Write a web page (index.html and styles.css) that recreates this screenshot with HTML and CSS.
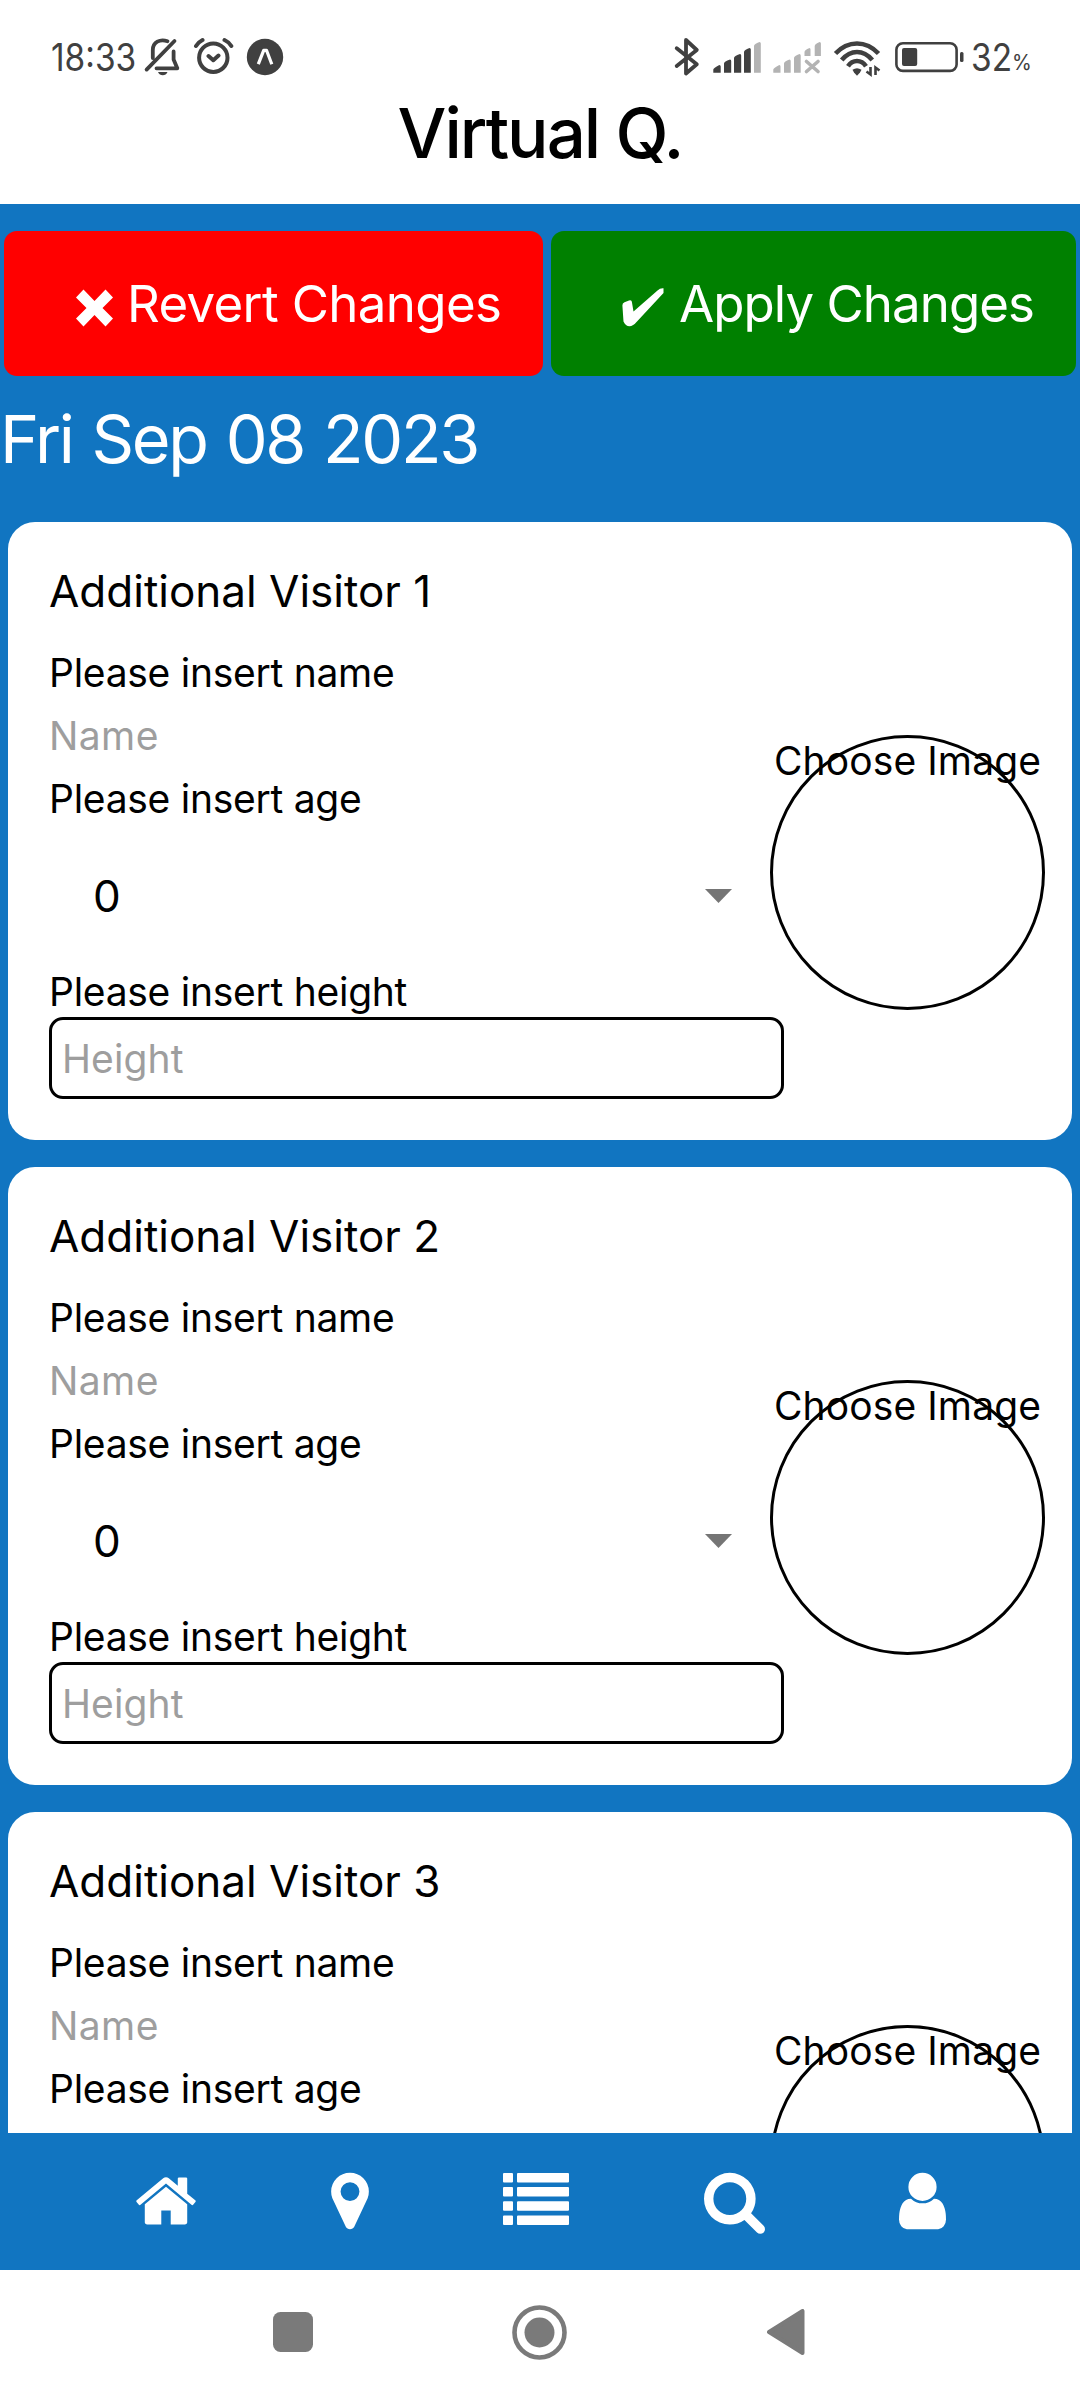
FILE: index.html
```
<!DOCTYPE html>
<html lang="en">
<head>
<meta charset="utf-8">
<title>Virtual Q.</title>
<link rel="stylesheet" href="styles.css">
</head>
<body>
<div class="screen">
  <header class="header">
    <div class="status">
      <div class="status-left">
        <span class="time">18:33</span>
        <svg class="bell" width="40" height="44" viewBox="143 36 40 44" fill="none" stroke="#404040" stroke-width="3.8" stroke-linecap="round" stroke-linejoin="round">
          <path d="M146.6 70.6 174.5 42M152.8 59V51C152.8 43 160 39.6 167.500 42.2M156.500 69.300H177.300L173.600 60.500V52.500"/>
          <path d="M158 73h9.500q-1.500 3.300-4.750 3.300t-4.750-3.300z" fill="#404040" stroke="none"/>
        </svg>
        <svg class="alarm" width="42" height="44" viewBox="192 36 42 44" fill="none" stroke="#404040" stroke-width="4" stroke-linecap="round" stroke-linejoin="round">
          <circle cx="213.300" cy="58.700" r="14.200"/>
          <path d="M208.500 57 213.300 61.200 218.500 56.500M196 47Q198.500 43 202.500 41M224.500 41Q229 43 231.300 47"/>
        </svg>
        <svg class="expo" width="38" height="38" viewBox="246 38 38 38">
          <circle cx="265" cy="57" r="18.200" fill="#404040"/>
          <path d="M258.300 64.200 263.700 50.300h2.800L271.800 64.200" fill="none" stroke="#fff" stroke-width="3.200" stroke-linejoin="round"/>
        </svg>
      </div>
      <div class="status-right">
        <svg width="225" height="44" viewBox="670 35 225 44">
          <path d="M676.700 48.300 696.800 64.200 686 73.500V40L696.800 50 676.700 66" fill="none" stroke="#404040" stroke-width="3.800" stroke-linecap="round" stroke-linejoin="round"/>
          <g fill="#404040">
            <path d="M713.300 72.700V69.500q0-1.500 6-4.500 1.400 0 1.400 1.500v6.200zM724 72.700V63.500q0-2 6-4 1.200 0 1.200 1.500v11.700zM734 72.700V58q0-2 6-4 1.200 0 1.200 1.500v17.200zM744 72.700V52q0-2 5.500-4 1.300 0 1.300 1.500v23.200z"/>
          </g>
          <g fill="#b3b3b3">
            <path d="M754 72.700V46q0-2 5.500-4 1.300 0 1.300 1.500v29.200zM773.300 72.700V69.500q0-1.500 6-4.500 1.200 0 1.200 1.500v6.200zM784 72.700V63.500q0-2 5.500-4 1.200 0 1.200 1.500v11.700zM794 72.700V58q0-2 5.500-4 1.200 0 1.200 1.500v17.200zM804.500 56V52q0-2 5-4 1 0 1 1.500V56zM814.700 56V46q0-2 5-4 1.200 0 1.200 1.500V56z"/>
          </g>
          <path d="M806.500 61.500 818 71.500M818 61.500 806.500 71.500" stroke="#b3b3b3" stroke-width="3.600" stroke-linecap="round"/>
          <g fill="none" stroke="#404040" stroke-width="4.600">
            <path d="M835.500 53.500Q845 43.500 857 43.500T878.500 53.500M841.700 60Q848.500 52 857 52T872.300 60M848 66.200Q851.500 61 857 61T866 66.200"/>
          </g>
          <path d="M852.500 69.800q4.500-3.300 9 0l-1.500 2.700-3 3.200-3-3.200z" fill="#404040"/>
          <path d="M870.500 67v7.500l-4-3M875.500 75v-7.500l4 3" fill="none" stroke="#404040" stroke-width="2.600"/>
        </svg>
        <svg width="70" height="32" viewBox="895 41 70 32">
          <rect x="896.400" y="43.300" width="60.200" height="27.600" rx="6.500" fill="none" stroke="#404040" stroke-width="2.600"/>
          <rect x="902" y="48" width="15.200" height="18" rx="2" fill="#404040"/>
          <rect x="960" y="52" width="3.500" height="10" rx="1.500" fill="#404040"/>
        </svg>
        <span class="battery">32</span><span class="percent">%</span>
      </div>
    </div>
    <h1 class="brand">Virtual Q.</h1>
  </header>

  <main class="content">
    <div class="actions">
      <button class="action revert">
        <svg width="37" height="38" viewBox="0 0 37 38"><path d="M7.500.5 18.500 12 29.500.5 37 8.500 26.500 19 37 29.500 29.500 37.500 18.500 26 7.500 37.500 0 29.500 10.500 19 0 8.500z" fill="#fff"/></svg>
        <span>Revert Changes</span>
      </button>
      <button class="action apply">
        <svg width="42" height="39" viewBox="0 0 42 39"><path d="M.4 17.500Q.3 15.200 2.500 14.200L7 12.500Q9.700 11.700 9.900 14L11.500 23.500 35.500 2.500Q38 0 41.500.3V5L15 33.500Q11 38.300 7.500 38.300 3.500 38 1.500 33.500z" fill="#fff"/></svg>
        <span>Apply Changes</span>
      </button>
    </div>
    <h2 class="date">Fri Sep 08 2023</h2>

    <div class="cards">
      <section class="card">
        <h3 class="card-title">Additional Visitor 1</h3>
        <div class="card-body">
          <div class="fields">
            <div class="row">Please insert name</div>
            <div class="row hint name">Name</div>
            <div class="row">Please insert age</div>
            <div class="select"><span>0</span><svg width="27" height="14" viewBox="0 0 27 14"><path d="M0 0h27L13.500 14z" fill="#757575"/></svg></div>
            <div class="row tight">Please insert height</div>
            <div class="input hint">Height</div>
          </div>
          <div class="avatar"><span>Choose Image</span></div>
        </div>
      </section>
      <section class="card">
        <h3 class="card-title">Additional Visitor 2</h3>
        <div class="card-body">
          <div class="fields">
            <div class="row">Please insert name</div>
            <div class="row hint name">Name</div>
            <div class="row">Please insert age</div>
            <div class="select"><span>0</span><svg width="27" height="14" viewBox="0 0 27 14"><path d="M0 0h27L13.500 14z" fill="#757575"/></svg></div>
            <div class="row tight">Please insert height</div>
            <div class="input hint">Height</div>
          </div>
          <div class="avatar"><span>Choose Image</span></div>
        </div>
      </section>
      <section class="card">
        <h3 class="card-title">Additional Visitor 3</h3>
        <div class="card-body">
          <div class="fields">
            <div class="row">Please insert name</div>
            <div class="row hint name">Name</div>
            <div class="row">Please insert age</div>
          </div>
          <div class="avatar"><span>Choose Image</span></div>
        </div>
      </section>
    </div>
  </main>

  <nav class="tabs">
    <svg width="60" height="66" viewBox="89 0 1614 1792"><path d="M1472 992v480q0 26-19 45t-45 19h-384v-384h-256v384h-384q-26 0-45-19t-19-45v-480q0-1 .5-3t.5-3l575-474 575 474q1 2 1 6zm223-69l-62 74q-8 9-21 11h-3q-13 0-21-7l-692-577-692 577q-12 8-24 7-13-2-21-11l-62-74q-8-10-7-23.500t11-21.500l719-599q32-26 76-26t76 26l244 204v-195q0-14 9-23t23-9h192q14 0 23 9t9 23v408l219 182q10 8 11 21.500t-7 23.500z"/></svg>
    <svg width="38" height="66" viewBox="384 0 1024 1792"><path d="M1152 640q0-106-75-181t-181-75-181 75-75 181 75 181 181 75 181-75 75-181zm256 0q0 109-33 179l-364 774q-16 33-47.500 52t-67.500 19-67.500-19-46.500-52l-365-774q-33-70-33-179 0-212 150-362t362-150 362 150 150 362z"/></svg>
    <svg width="66" height="66" viewBox="0 0 66 66"><path d="M1 5h8q1 0 1 1v7.500q0 1-1 1H1q-1 0-1-1V6q0-1 1-1zm0 14.100h8q1 0 1 1v7.500q0 1-1 1H1q-1 0-1-1v-7.500q0-1 1-1zm0 14.100h8q1 0 1 1v7.500q0 1-1 1H1q-1 0-1-1v-7.500q0-1 1-1zm0 14.200h8q1 0 1 1v7.500q0 1-1 1H1q-1 0-1-1v-7.500q0-1 1-1zM15 5h50q1 0 1 1v7.500q0 1-1 1H15q-1 0-1-1V6q0-1 1-1zm0 14.100h50q1 0 1 1v7.500q0 1-1 1H15q-1 0-1-1v-7.500q0-1 1-1zm0 14.100h50q1 0 1 1v7.500q0 1-1 1H15q-1 0-1-1v-7.500q0-1 1-1zm0 14.200h50q1 0 1 1v7.500q0 1-1 1H15q-1 0-1-1v-7.500q0-1 1-1z"/></svg>
    <svg width="61" height="68" viewBox="64 0 1664 1846"><path d="M1216 832q0-185-131.500-316.500t-316.500-131.500-316.500 131.500-131.500 316.500 131.500 316.500 316.500 131.500 316.500-131.500 131.500-316.500zm512 832q0 52-38 90t-90 38q-54 0-90-38l-343-342q-179 124-399 124-143 0-273.500-55.500t-225-150-150-225-55.500-273.500 55.500-273.500 150-225 225-150 273.500-55.500 273.500 55.500 225 150 150 225 55.500 273.500q0 220-124 399l343 343q37 37 37 90z"/></svg>
    <svg width="47" height="66" viewBox="256 0 1280 1792"><path d="M1536 1399q0 109-62.500 187t-150.500 78h-854q-88 0-150.500-78t-62.500-187q0-85 8.500-160.500t31.500-152 58.500-131 94-89 134.500-34.500q131 128 313 128t313-128q76 0 134.500 34.500t94 89 58.500 131 31.500 152 8.500 160.500zm-256-887q0 159-112.500 271.500t-271.500 112.500-271.500-112.500-112.500-271.500 112.500-271.500 271.500-112.500 271.500 112.500 112.500 271.500z"/></svg>
  </nav>

  <footer class="system">
    <svg width="40" height="40" viewBox="0 0 40 40"><rect width="40" height="40" rx="7.500" fill="#7a7a7a"/></svg>
    <svg width="55" height="55" viewBox="0 0 55 55"><circle cx="27.500" cy="27.500" r="25" fill="none" stroke="#7a7a7a" stroke-width="4.600"/><circle cx="27.500" cy="27.500" r="15" fill="#7a7a7a"/></svg>
    <svg width="38" height="46" viewBox="0 0 38 46"><path d="M2 23 35.500 2V44z" fill="#7a7a7a" stroke="#7a7a7a" stroke-width="4" stroke-linejoin="round"/></svg>
  </footer>
</div>
</body>
</html>
```
FILE: styles.css
```
* { box-sizing: border-box; }
body { margin: 0; font-family: Inter, "Liberation Sans", sans-serif; color: #000; background: #fff; }
h1, h2, h3 { margin: 0; font-weight: 400; }
svg { display: block; flex: none; }

.screen { width: 1080px; height: 2400px; display: flex; flex-direction: column; overflow: hidden; }

.header { height: 204px; flex: none; }
.status { height: 80px; padding: 34px 50px 0 51px; display: flex; justify-content: space-between; align-items: center; color: #404040; }
.status-left, .status-right { display: flex; align-items: center; }
.time, .battery { font-size: 38px; line-height: 46px; transform: scaleX(.88); transform-origin: left; white-space: nowrap; }
.time { width: 92px; }
.alarm { margin: 0 12px 0 9px; }
.battery { width: 41px; margin-left: 6px; }
.percent { font-size: 21px; line-height: 21px; width: 18px; padding-top: 11px; transform: scaleX(.96); transform-origin: left; }
.brand { margin-top: 8px; font-size: 69px; line-height: 90px; font-weight: 550; letter-spacing: -2px; text-align: center; }

.content { height: 1929px; flex: none; background: #1175c1; padding-top: 27px; overflow: hidden; }
.actions { display: flex; gap: 8px; padding: 0 4px; }
.action { height: 145px; border: 0; border-radius: 13px; display: flex; align-items: center; font: 400 51px/60px Inter, "Liberation Sans", sans-serif; color: #fff; white-space: nowrap; }
.action svg { margin-top: 8px; }
.revert { width: 539px; background: #f00; padding: 0 0 0 72px; gap: 14px; letter-spacing: -.65px; }
.apply { width: 525px; background: #008000; padding: 0 0 0 71px; gap: 15px; letter-spacing: -.95px; }
.date { margin-top: 23px; font-size: 66.500px; line-height: 80px; letter-spacing: -2.3px; word-spacing: 2.5px; color: #fff; }

.cards { margin-top: 43px; padding: 0 8px; display: flex; flex-direction: column; gap: 27px; }
.card { height: 618px; flex: none; background: #fff; border-radius: 27px; padding: 44px 27px 0 41px; }
.card-title { font-size: 44px; line-height: 50px; letter-spacing: 0; }
.card-body { display: flex; padding-top: 25px; font-size: 39px; letter-spacing: -.27px; }
.fields { width: 721px; flex: none; }
.row { line-height: 63px; }
.tight { line-height: 50px; }
.hint { color: #9e9e9e; letter-spacing: .1px; }
.name { letter-spacing: .4px; }
.select { height: 131px; margin-bottom: 6px; padding: 0 38px 0 44px; display: flex; align-items: center; justify-content: space-between; font-size: 44px; }
.input { width: 735px; height: 82px; border: 3px solid #000; border-radius: 14px; padding-left: 10px; display: flex; align-items: center; }
.avatar { width: 275px; height: 275px; margin-top: 94px; border: 3px solid #000; border-radius: 50%; line-height: 46px; letter-spacing: .1px; display: flex; justify-content: center; white-space: nowrap; }

.tabs { height: 137px; flex: none; background: #1175c1; fill: #fff; padding: 35px 0 0 2px; display: flex; justify-content: center; gap: 134.500px; }
.system { height: 130px; flex: none; padding: 0 3px 6px 0; display: flex; justify-content: center; align-items: center; gap: 199.500px; }
```
